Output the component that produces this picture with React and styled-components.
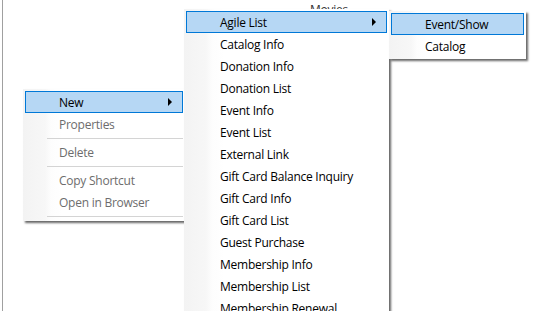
import styled, { createGlobalStyle } from "styled-components";

const Global = createGlobalStyle`
  html, body {
    margin: 0;
    padding: 0;
    background: #fff;
  }
  body {
    font-family: "Segoe UI", "Open Sans", "Noto Sans", sans-serif;
    font-size: 12px;
    letter-spacing: -0.25px;
  }
`;

const Canvas = styled.div`
  position: relative;
  width: 554px;
  height: 311px;
  overflow: hidden;
  background: #fff;
  box-sizing: border-box;
  border-left: 2px solid #fff;
  &::before {
    content: "";
    position: absolute;
    left: 0;
    top: 0;
    bottom: 0;
    width: 1px;
    background: #a0a0a0;
  }
`;

const BackLabel = styled.div`
  position: absolute;
  left: 308px;
  top: 1px;
  color: #333;
  font-size: 12px;
`;

const Menu = styled.div`
  position: absolute;
  left: ${(p) => p.$x}px;
  top: ${(p) => p.$y}px;
  width: ${(p) => p.$w}px;
  padding: 2px;
  background: linear-gradient(
    to right,
    #f3f3f3 0px,
    #f7f7f7 22px,
    #fdfdfd 28px,
    #ffffff 40px
  );
  box-shadow: 2px 2px 2px rgba(0, 0, 0, 0.6);
  display: flex;
  flex-direction: column;
  z-index: ${(p) => p.$z};
`;

const Item = styled.div`
  position: relative;
  height: 22px;
  box-sizing: border-box;
  display: flex;
  align-items: center;
  padding-left: 33px;
  border: 1px solid ${(p) => (p.$active ? "#0078d7" : "transparent")};
  background: ${(p) => (p.$active ? "#b6d7f4" : "transparent")};
  color: ${(p) => (p.$disabled ? "#6d6d6d" : "#000")};
  white-space: nowrap;
`;

const Arrow = styled.span`
  position: absolute;
  right: 10px;
  top: 6px;
  width: 0;
  height: 0;
  border-top: 4px solid transparent;
  border-bottom: 4px solid transparent;
  border-left: 4px solid #000;
`;

const Separator = styled.div`
  height: 6px;
  display: flex;
  align-items: center;
  padding-left: 22px;
  &::after {
    content: "";
    flex: 1;
    height: 1px;
    background: #d4d4d4;
  }
`;

const mainMenu = [
  { label: "New", active: true, sub: true },
  { label: "Properties", disabled: true },
  { sep: true },
  { label: "Delete", disabled: true },
  { sep: true },
  { label: "Copy Shortcut", disabled: true },
  { label: "Open in Browser", disabled: true },
  { sep: true },
];

const newMenu = [
  { label: "Agile List", active: true, sub: true },
  { label: "Catalog Info" },
  { label: "Donation Info" },
  { label: "Donation List" },
  { label: "Event Info" },
  { label: "Event List" },
  { label: "External Link" },
  { label: "Gift Card Balance Inquiry" },
  { label: "Gift Card Info" },
  { label: "Gift Card List" },
  { label: "Guest Purchase" },
  { label: "Membership Info" },
  { label: "Membership List" },
  { label: "Membership Renewal" },
];

const agileMenu = [
  { label: "Event/Show", active: true },
  { label: "Catalog" },
];

const MenuList = ({ items, x, y, w, z }) => (
  <Menu $x={x} $y={y} $w={w} $z={z}>
    {items.map((it, i) =>
      it.sep ? (
        <Separator key={i} />
      ) : (
        <Item key={i} $active={it.active} $disabled={it.disabled}>
          {it.label}
          {it.sub && <Arrow />}
        </Item>
      )
    )}
  </Menu>
);

export default function App() {
  return (
    <>
      <Global />
      <Canvas>
        <BackLabel>Movies</BackLabel>
        <MenuList items={mainMenu} x={21} y={89} w={158} z={1} />
        <MenuList items={newMenu} x={182} y={9} w={201} z={2} />
        <MenuList items={agileMenu} x={387} y={11} w={133} z={3} />
      </Canvas>
    </>
  );
}
